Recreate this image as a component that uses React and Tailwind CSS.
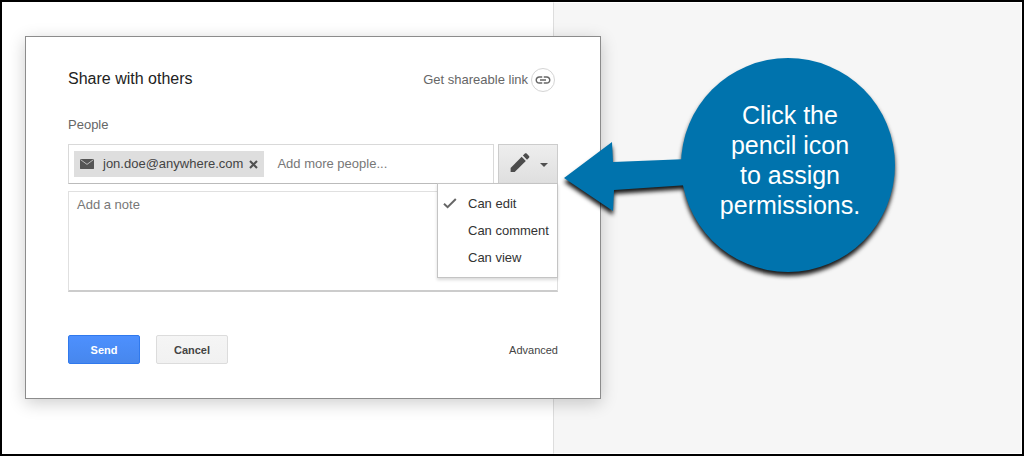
import React from "react";

const permissions = ["Can edit", "Can comment", "Can view"];

function MailIcon() {
  return (
    <svg className="h-[10px] w-[14px] shrink-0" viewBox="0 0 14 10" aria-hidden="true">
      <rect width="14" height="10" rx="0.4" fill="#555" />
      <path d="M0.5 0.6 L7 5.4 L13.5 0.6" fill="none" stroke="#bbb" strokeWidth="1" />
    </svg>
  );
}

function CloseIcon() {
  return (
    <svg className="size-[9px]" viewBox="0 0 9 9" aria-hidden="true">
      <path d="M1 1 L8 8 M8 1 L1 8" stroke="#505050" strokeWidth="2.1" />
    </svg>
  );
}

function LinkIcon() {
  return (
    <svg className="size-[18px]" viewBox="0 0 24 24" fill="#666" aria-hidden="true">
      <path d="M3.9 12c0-1.71 1.39-3.1 3.1-3.1h4V7H7c-2.76 0-5 2.24-5 5s2.24 5 5 5h4v-1.9H7c-1.71 0-3.1-1.39-3.1-3.1zM8 13h8v-2H8v2zm9-6h-4v1.9h4c1.71 0 3.1 1.39 3.1 3.1s-1.39 3.1-3.1 3.1h-4V17h4c2.76 0 5-2.24 5-5s-2.24-5-5-5z" />
    </svg>
  );
}

function PencilIcon() {
  return (
    <svg className="size-6" viewBox="0 0 24 24" fill="#4c4c4c" aria-hidden="true">
      <path d="M2.6 16.9 V21 H6.7 L17.8 9.9 L13.7 5.8 Z" />
      <path d="M21 6.7 C21.5 6.2 21.5 5.5 21 5 L18.6 2.6 C18.1 2.1 17.4 2.1 16.9 2.6 L14.9 4.6 L19 8.7 Z" />
    </svg>
  );
}

function CheckIcon() {
  return (
    <svg className="h-[11px] w-[14px]" viewBox="0 0 14 11" aria-hidden="true">
      <path d="M1 5.8 L4.6 9.2 L12.8 1" fill="none" stroke="#666" strokeWidth="2" />
    </svg>
  );
}

function PermissionPicker() {
  return (
    <div className="relative shrink-0">
      <button
        type="button"
        aria-label="Permissions"
        aria-haspopup="menu"
        aria-expanded="true"
        className="flex h-10 w-[60px] items-center justify-center gap-2 border border-[#ccc] bg-linear-to-b from-[#eee] to-[#dfdfdf] pb-0.5"
      >
        <PencilIcon />
        <svg className="mt-1 h-1 w-2" viewBox="0 0 8 4" fill="#505050" aria-hidden="true">
          <path d="M0 0 H8 L4 4 Z" />
        </svg>
      </button>
      <div
        role="menu"
        className="absolute top-[39px] right-0 z-10 w-[121px] border border-[#c4c4c4] bg-white py-1.5 shadow-[0_2px_3px_rgba(0,0,0,0.15)]"
      >
        {permissions.map((label, index) => (
          <button
            key={label}
            type="button"
            role="menuitemradio"
            aria-checked={index === 0}
            className="flex h-[27px] w-full items-center whitespace-nowrap pl-[5px] text-left text-[#333]"
          >
            <span className="w-[25px] shrink-0">{index === 0 && <CheckIcon />}</span>
            {label}
          </button>
        ))}
      </div>
    </div>
  );
}

function ShareDialog() {
  return (
    <form
      role="dialog"
      aria-labelledby="share-title"
      onSubmit={(event) => event.preventDefault()}
      className="relative w-[576px] max-w-full border border-[#8c8c8c] bg-white px-[42px] pt-[31px] pb-[34px] text-[13px] leading-4 text-[#666] shadow-[0_4px_16px_rgba(0,0,0,0.2)]"
    >
      <div className="flex h-6 items-center justify-between">
        <h1 id="share-title" className="-mt-0.5 text-base text-[#222]">
          Share with others
        </h1>
        <button type="button" className="mr-[3px] flex items-center gap-[3px]">
          Get shareable link
          <span className="flex size-6 items-center justify-center rounded-full border border-[#d4d4d4]">
            <LinkIcon />
          </span>
        </button>
      </div>

      <label htmlFor="people" className="mt-[25px] block">
        People
      </label>
      <div className="mt-[11px] flex gap-1">
        <div className="flex h-10 min-w-0 flex-1 items-center border border-[#d9d9d9] border-b-[#bbb] pl-[5px]">
          <span className="flex h-[26px] shrink-0 items-center bg-[#dedede] px-1.5 text-[#444]">
            <MailIcon />
            <span className="ml-[9px]">jon.doe@anywhere.com</span>
            <button type="button" aria-label="Remove jon.doe@anywhere.com" className="ml-1.5">
              <CloseIcon />
            </button>
          </span>
          <input
            id="people"
            type="text"
            placeholder="Add more people..."
            className="ml-[13px] min-w-0 flex-1 outline-none placeholder:text-[#777]"
          />
        </div>
        <PermissionPicker />
      </div>

      <textarea
        aria-label="Add a note"
        placeholder="Add a note"
        className="mt-[7px] block h-[101px] w-full resize-none border border-[#e0e0e0] border-b-2 border-b-[#ccc] px-2 py-[5px] outline-none placeholder:text-[#777]"
      />

      <div className="mt-[43px] flex items-center gap-4 text-[11px]">
        <button
          type="submit"
          className="h-[29px] w-[72px] rounded-xs border border-[#3079ed] bg-linear-to-b from-[#4d90fe] to-[#4787ed] font-bold text-white"
        >
          Send
        </button>
        <button
          type="button"
          className="h-[29px] w-[72px] rounded-xs border border-[#dcdcdc] bg-linear-to-b from-[#f5f5f5] to-[#f1f1f1] font-bold text-[#444]"
        >
          Cancel
        </button>
        <a href="#advanced" className="ml-auto text-[#444]">
          Advanced
        </a>
      </div>
    </form>
  );
}

function Callout() {
  return (
    <aside className="absolute top-[54px] left-[562px] h-[216px] w-[334px]">
      <svg
        className="absolute inset-0 size-full overflow-visible drop-shadow-[0_4px_2px_rgba(0,0,0,0.9)]"
        viewBox="0 0 334 216"
        fill="#0073ad"
        aria-hidden="true"
      >
        <circle cx="224" cy="109" r="107" />
        <path d="M0 122 L48 86 L49 106 L124 103 V129 L50 134 L49 155 Z" />
      </svg>
      <p className="relative ml-auto flex h-full w-[216px] items-center justify-center pb-2 text-center text-[25px] leading-[30px] text-white">
        <span>
          Click the
          <br />
          pencil icon
          <br />
          to assign
          <br />
          permissions.
        </span>
      </p>
    </aside>
  );
}

export default function App() {
  return (
    <main className="relative min-h-screen border-2 border-black bg-white pt-[34px] pl-[23px] font-['Liberation_Sans',Arial,sans-serif]">
      <div className="absolute inset-y-0 right-0 left-[551px] border border-white border-l-[#ddd] bg-[#f6f6f6]" />
      <ShareDialog />
      <Callout />
    </main>
  );
}
